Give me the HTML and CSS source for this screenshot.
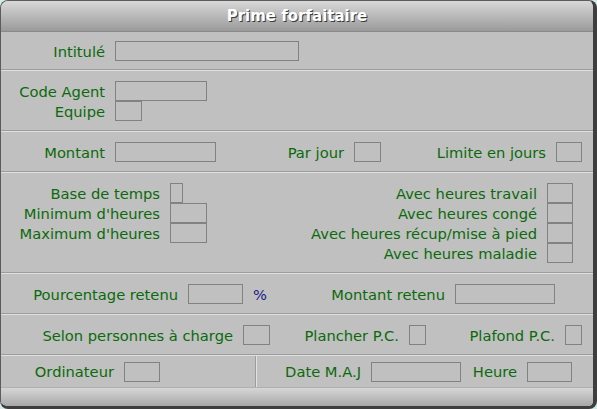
FILE: index.html
```html
<!DOCTYPE html>
<html lang="fr">
  <head>
    <meta charset="utf-8">
    <meta name="viewport" content="width=device-width, initial-scale=1.0">
    <title>Prime forfaitaire</title>
    <link rel="stylesheet" href="styles.css">
  </head>
  <body>
    <!-- Fenêtre de saisie -->
    <div class="window">
      <div class="titlebar">Prime forfaitaire</div>

      <section class="sec sec-intitule">
        <label class="lbl w-left">Intitulé</label>
        <span class="box w-intitule"></span>
      </section>

      <section class="sec sec-agent">
        <div class="line">
          <label class="lbl w-left">Code Agent</label>
          <span class="box w-code"></span>
        </div>
        <div class="line">
          <label class="lbl w-left">Equipe</label>
          <span class="box w-27"></span>
        </div>
      </section>

      <section class="sec">
        <label class="lbl w-left">Montant</label>
        <span class="box w-montant"></span>
        <label class="lbl w-parjour">Par jour</label>
        <span class="box w-27"></span>
        <label class="lbl w-limite">Limite en jours</label>
        <span class="box w-26"></span>
      </section>

      <section class="sec sec-heures">
        <div class="col col-base">
          <label class="lbl">Base de temps</label>
          <span class="box w-13"></span>
          <label class="lbl">Minimum d'heures</label>
          <span class="box w-37"></span>
          <label class="lbl">Maximum d'heures</label>
          <span class="box w-37"></span>
        </div>
        <div class="col col-avec">
          <label class="lbl">Avec heures travail</label>
          <span class="box w-26"></span>
          <label class="lbl">Avec heures congé</label>
          <span class="box w-26"></span>
          <label class="lbl">Avec heures récup/mise à pied</label>
          <span class="box w-26"></span>
          <label class="lbl">Avec heures maladie</label>
          <span class="box w-26"></span>
        </div>
      </section>

      <section class="sec">
        <label class="lbl w-pourcent">Pourcentage retenu</label>
        <span class="box w-55"></span>
        <span class="unit">%</span>
        <label class="lbl w-retenu">Montant retenu</label>
        <span class="box w-100"></span>
      </section>

      <section class="sec">
        <label class="lbl w-selon">Selon personnes à charge</label>
        <span class="box w-27"></span>
        <label class="lbl w-plancher">Plancher P.C.</label>
        <span class="box w-17"></span>
        <label class="lbl w-plafond">Plafond P.C.</label>
        <span class="box w-17"></span>
      </section>

      <section class="sec sec-last">
        <div class="half half-left">
          <label class="lbl w-ordi">Ordinateur</label>
          <span class="box w-36"></span>
        </div>
        <div class="half">
          <label class="lbl w-date">Date M.A.J</label>
          <span class="box w-90"></span>
          <label class="lbl w-heure">Heure</label>
          <span class="box w-45"></span>
        </div>
      </section>

      <div class="statusbar"></div>
    </div>
  </body>
</html>
```

FILE: styles.css
```css
/* Reseteo */
* {
  margin: 0;
  padding: 0;
  box-sizing: border-box;
}

body {
  width: 597px;
  height: 409px;
  background: #d3ebe7;
  font-family: "DejaVu Sans", Verdana, sans-serif;
  font-size: 14.7px;
  overflow: hidden;
}

/* Fenêtre */
.window {
  height: 409px;
  display: flex;
  flex-direction: column;
  background: #c0c0c0;
  border: 1px solid #5c5c5c;
  border-right: 4px solid #3e3e3e;
  border-bottom: 3px solid #3e3e3e;
  border-radius: 8px;
  overflow: hidden;
}

.titlebar {
  height: 31px;
  flex: none;
  background: linear-gradient(#d8d8d8, #9a9a9a);
  border-bottom: 1px solid #8a8a8a;
  color: white;
  font-weight: bold;
  font-size: 15px;
  text-align: center;
  line-height: 30px;
  text-shadow: 1px 1px 0 #3a3a3a;
}

/* Sections séparées par un double trait */
.sec {
  display: flex;
  align-items: center;
  height: 41px;
  flex: none;
  border-bottom: 1px solid #e0e0e0;
  box-shadow: inset 0 -1px 0 #9c9c9c;
}

.sec-intitule {
  height: 39px;
}

.sec-agent {
  height: 61px;
  flex-direction: column;
  align-items: flex-start;
  justify-content: center;
}

.sec-heures {
  height: 101px;
  align-items: flex-start;
  padding-top: 10px;
}

.sec-last {
  height: 31px;
  border: none;
  box-shadow: none;
  align-items: stretch;
}

.line {
  display: flex;
  align-items: center;
  height: 20px;
}

.lbl {
  color: #0b6a0b;
  text-align: right;
  white-space: nowrap;
  padding-right: 10px;
}

.box {
  height: 20px;
  border: 1px solid #828282;
  flex: none;
}

.unit {
  color: #1a1a8a;
  margin-left: 10px;
  width: 15px;
}

/* Largeurs des libellés */
.w-left { width: 114px; }
.w-parjour { width: 138px; }
.w-limite { width: 175px; }
.w-pourcent { width: 187px; }
.w-retenu { width: 187px; }
.w-selon { width: 242px; }
.w-plancher { width: 139px; }
.w-plafond { width: 139px; }
.w-ordi { width: 123px; }
.w-date { width: 114px; }
.w-heure { width: 66px; }

/* Largeurs des champs */
.w-intitule { width: 184px; }
.w-code { width: 92px; }
.w-montant { width: 101px; }
.w-13 { width: 13px; }
.w-17 { width: 17px; }
.w-26 { width: 26px; }
.w-27 { width: 27px; }
.w-36 { width: 36px; }
.w-37 { width: 37px; }
.w-45 { width: 45px; }
.w-55 { width: 55px; }
.w-90 { width: 90px; }
.w-100 { width: 100px; }

/* Colonnes d'heures */
.col {
  display: grid;
  grid-auto-rows: 20px;
  align-items: center;
  justify-items: start;
}

.col .lbl {
  justify-self: stretch;
}

.col-base {
  grid-template-columns: 169px 37px;
}

.col-avec {
  grid-template-columns: 340px 26px;
}

/* Dernière ligne en deux moitiés */
.half {
  display: flex;
  align-items: center;
}

.half-left {
  width: 256px;
  border-right: 1px solid #e2e2e2;
  box-shadow: inset -1px 0 0 #9c9c9c;
}

.statusbar {
  flex: 1;
  background: linear-gradient(#d6d6d6, #a8a8a8);
  border-top: 1px solid #b0b0b0;
}
```
